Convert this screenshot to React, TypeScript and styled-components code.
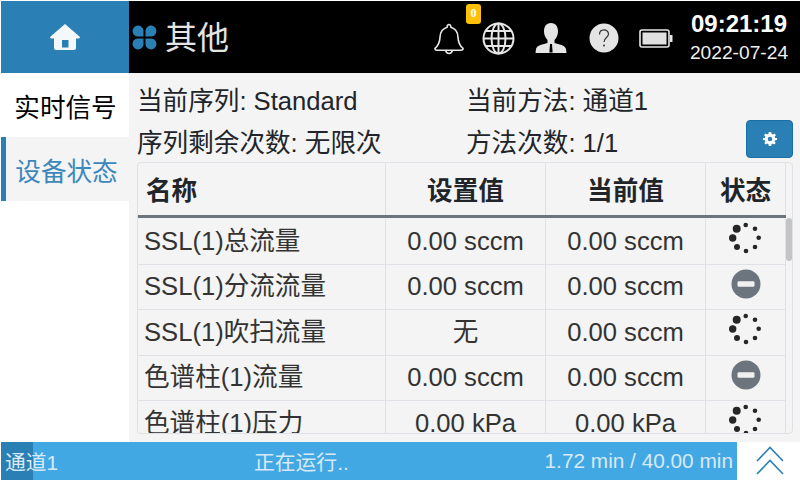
import React from "react";
import styled, { createGlobalStyle } from "styled-components";

const Global = createGlobalStyle`
  html, body { margin: 0; padding: 0; background: #fff; }
  * { box-sizing: border-box; }
  body { font-family: "Liberation Sans", "Noto Sans CJK SC", sans-serif; color: #212529; }
`;

const Screen = styled.div`
  width: 800px;
  height: 480px;
  padding: 1px 0 0 1px;
  background: #fff;
  display: grid;
  grid-template-rows: 72px 369px 38px;
  overflow: hidden;
`;

const Header = styled.header`
  display: flex;
  align-items: stretch;
  background: #000;
`;

const HomeCell = styled.div`
  width: 128px;
  background: #2a7fb4;
  display: flex;
  align-items: center;
  justify-content: center;
`;

const TitleBlock = styled.div`
  display: flex;
  align-items: center;
  padding-left: 3px;
  gap: 8px;
  flex: 1;
`;

const Title = styled.span`
  font-size: 32px;
  line-height: 1;
  color: #e4e4e4;
  padding-top: 2px;
`;

const IconSlot = styled.div<{ $w: number }>`
  position: relative;
  width: ${(p) => p.$w}px;
  display: flex;
  align-items: center;
  justify-content: center;
  padding-top: 2px;
`;

const Badge = styled.span`
  position: absolute;
  top: 3px;
  left: 42px;
  width: 15px;
  height: 20px;
  border-radius: 3px;
  background: #ffc107;
  color: #fff;
  font-family: "Liberation Serif", serif;
  font-weight: bold;
  font-size: 12px;
  line-height: 18px;
  text-align: center;
`;

const Clock = styled.div`
  width: 100px;
  margin: 0 11px 0 7px;
  display: flex;
  flex-direction: column;
  align-items: center;
  color: #fff;
  padding-top: 9px;
`;

const Time = styled.div`
  font-size: 24px;
  font-weight: bold;
  line-height: 27px;
`;

const DateText = styled.div`
  font-size: 19.2px;
  line-height: 24px;
  margin-top: 4px;
  color: #f0f0f0;
`;

const Body = styled.div`
  display: flex;
  min-height: 0;
`;

const Side = styled.nav`
  width: 128px;
  flex: none;
  background: #fff;
`;

const SideItem = styled.div<{ $active?: boolean }>`
  height: 64px;
  display: flex;
  align-items: center;
  justify-content: center;
  font-size: 25.6px;
  padding-left: ${(p) => (p.$active ? "0" : "1px")};
  padding-right: ${(p) => (p.$active ? "2px" : "0")};
  color: ${(p) => (p.$active ? "#3c88bd" : "#000")};
  background: ${(p) => (p.$active ? "#f4f4f4" : "#fff")};
  border-left: ${(p) => (p.$active ? "5px solid #2a7fb4" : "0")};
`;

const Main = styled.main`
  flex: 1;
  min-width: 0;
  background: #f4f4f4;
  padding: 6px 7px 8px 8px;
  display: flex;
  flex-direction: column;
`;

const InfoGrid = styled.div`
  display: grid;
  grid-template-columns: 329px 1fr 47px;
  grid-template-rows: 42px 32px;
  padding-top: 9px;
  height: 83px;
  align-items: start;
  font-size: 25.6px;
  color: #212529;
  line-height: 26px;
`;

const InfoText = styled.div<{ $col: number }>`
  grid-column: ${(p) => p.$col};
  white-space: nowrap;
`;

const GearButton = styled.button`
  grid-column: 3;
  grid-row: 2;
  align-self: start;
  width: 47px;
  height: 38px;
  border-radius: 4px;
  border: 1px solid #1a6ea8;
  background: #2a7fb4;
  padding: 0;
  display: flex;
  align-items: center;
  justify-content: center;
  margin-top: -10px;
`;

const TableBox = styled.div`
  position: relative;
  flex: 1;
  min-height: 0;
  border: 1px solid #dee2e6;
  border-radius: 4px;
  display: flex;
  flex-direction: column;
  overflow: hidden;
`;

const HeadRow = styled.div`
  display: grid;
  grid-template-columns: 248px 160px 160px 80px;
  height: 55px;
  flex: none;
  border-bottom: 3px solid #6c757d;
  margin-right: 6px;
  font-size: 25.6px;
  font-weight: bold;
`;

const HeadCell = styled.div<{ $left?: boolean }>`
  display: flex;
  align-items: center;
  justify-content: ${(p) => (p.$left ? "flex-start" : "center")};
  padding-left: ${(p) => (p.$left ? "8px" : "0")};
  padding-bottom: 1px;
  border-right: 1px solid #dee2e6;
`;

const Rows = styled.div`
  flex: 1;
  min-height: 0;
  overflow: hidden;
  margin-right: 6px;
  padding-top: 1px;
`;

const Thumb = styled.div`
  position: absolute;
  top: 55px;
  right: 0;
  width: 6px;
  height: 43px;
  border-radius: 3px;
  background: #c4c4c4;
`;

const Row = styled.div`
  display: grid;
  grid-template-columns: 248px 160px 160px 80px;
  height: 45.5px;
  border-bottom: 1px solid #dee2e6;
  font-size: 25.6px;
  color: #333;
`;

const Cell = styled.div<{ $left?: boolean }>`
  display: flex;
  align-items: center;
  justify-content: ${(p) => (p.$left ? "flex-start" : "center")};
  padding-left: ${(p) => (p.$left ? "6px" : "0")};
  padding-top: 1px;
  border-right: 1px solid #dee2e6;
  white-space: nowrap;
  line-height: 1;
`;

const IconCell = styled(Cell)`
  padding-bottom: 7px;
`;

const Footer = styled.footer`
  display: flex;
  align-items: stretch;
`;

const Progress = styled.div`
  position: relative;
  flex: 1;
  background: #42a8e4;
  color: #d8e8f4;
  font-size: 20.8px;
`;

const ProgressFill = styled.div`
  position: absolute;
  inset: 0 auto 0 0;
  background: #2a7fb4;
`;

const ProgressText = styled.div`
  position: relative;
  height: 100%;
  display: flex;
  align-items: center;
  justify-content: space-between;
  padding: 0 4px;
`;

const Collapse = styled.div`
  width: 63px;
  flex: none;
  background: #fff;
  padding-left: 2px;
  display: flex;
  align-items: center;
  justify-content: center;
`;

const Spinner = () => (
  <svg width="34" height="34" viewBox="-17 -17 34 34" fill="#262626">
    <circle cx="-9.3" cy="-9.2" r="4" />
    <circle cx="-0.3" cy="-13" r="2.3" />
    <circle cx="9" cy="-9.2" r="2.3" />
    <circle cx="12.7" cy="-0.2" r="2.3" />
    <circle cx="9" cy="9" r="2.3" />
    <circle cx="0" cy="13" r="2.3" />
    <circle cx="-9" cy="9" r="3" />
    <circle cx="-13.3" cy="0" r="3.7" />
  </svg>
);

const Stopped = () => (
  <svg width="30" height="30" viewBox="0 0 30 30">
    <circle cx="15" cy="15" r="14.5" fill="#6c757d" />
    <rect x="6.5" y="12.2" width="17" height="5.6" rx="1.4" fill="#f0f0f0" />
  </svg>
);

type Status = "run" | "stop";
const rows: [string, string, string, Status][] = [
  ["SSL(1)总流量", "0.00 sccm", "0.00 sccm", "run"],
  ["SSL(1)分流流量", "0.00 sccm", "0.00 sccm", "stop"],
  ["SSL(1)吹扫流量", "无", "0.00 sccm", "run"],
  ["色谱柱(1)流量", "0.00 sccm", "0.00 sccm", "stop"],
  ["色谱柱(1)压力", "0.00 kPa", "0.00 kPa", "run"],
];

export default function App() {
  const elapsed = 1.72;
  const total = 40;
  return (
    <>
      <Global />
      <Screen>
        <Header>
          <HomeCell>
            <svg width="32" height="28" viewBox="0 0 32 28">
              <path
                fill="#f4f8fb"
                d="M16 1 L31 14 Q31 15.5 29 15.5 L27 15.5 L27 25 Q27 27 25 27 L7 27 Q5 27 5 25 L5 15.5 L3 15.5 Q1 15.5 1 14 Z"
              />
              <rect x="13" y="17" width="6.5" height="7.5" fill="#2a7fb4" />
            </svg>
          </HomeCell>
          <TitleBlock>
            <svg width="25" height="25" viewBox="0 0 25 25" fill="#2a7fb4">
              <path d="M11.5 11.5 H5.5 A5.5 5.5 0 1 1 11.5 5.5 Z" />
              <path d="M13.5 11.5 H19.5 A5.5 5.5 0 1 0 13.5 5.5 Z" />
              <path d="M11.5 13.5 H5.5 A5.5 5.5 0 1 0 11.5 19.5 Z" />
              <path d="M13.5 13.5 H19.5 A5.5 5.5 0 1 1 13.5 19.5 Z" />
            </svg>
            <Title>其他</Title>
          </TitleBlock>
          <IconSlot $w={49}>
            <svg width="30" height="33" viewBox="0 0 32 34" fill="none" stroke="#e6e6e6" strokeWidth="1.7">
              <path d="M16 2 Q18 2 18 5 Q25 7 25.5 15 Q26 24 31 27.5 Q31 29.5 29 29.5 H3 Q1 29.5 1 27.5 Q6 24 6.5 15 Q7 7 14 5 Q14 2 16 2 Z" strokeLinejoin="round" />
              <path d="M12.5 30 Q13 33 16 33 Q19 33 19.5 30" />
            </svg>
            <Badge>0</Badge>
          </IconSlot>
          <IconSlot $w={51}>
            <svg width="33" height="33" viewBox="0 0 33 33" fill="none" stroke="#e6e6e6" strokeWidth="2">
              <circle cx="16.5" cy="16.5" r="15" />
              <ellipse cx="16.5" cy="16.5" rx="7" ry="15" />
              <path d="M16.5 1.5 V31.5 M1.5 16.5 H31.5 M3.8 9 H29.2 M3.8 24 H29.2" />
            </svg>
          </IconSlot>
          <IconSlot $w={53}>
            <svg width="32" height="31" viewBox="0 0 32 31">
              <path fill="#e6e6e6" d="M16 0 C21 0 23 4 23 8.5 C23 12 21.5 15 19.5 17 L19.5 20 C24 21.5 30 22 31 26 L31.5 30 H0.5 L1 26 C2 22 8 21.5 12.5 20 L12.5 17 C10.5 15 9 12 9 8.5 C9 4 11 0 16 0 Z" />
              <path fill="#000" d="M15 21 H17 L17.6 29.5 H14.4 Z" />
            </svg>
          </IconSlot>
          <IconSlot $w={53}>
            <svg width="30" height="30" viewBox="0 0 30 30">
              <circle cx="15" cy="15" r="14.5" fill="#e4e4e4" />
              <path d="M10.5 11.5 C10.5 5.5 19.5 5.5 19.5 11 C19.5 14.5 15 14.5 15 19" fill="none" stroke="#333" strokeWidth="1.2" />
              <circle cx="15" cy="22.5" r="1" fill="#333" />
            </svg>
          </IconSlot>
          <IconSlot $w={52}>
            <svg width="34" height="19" viewBox="0 0 34 19">
              <rect x="1" y="1" width="29" height="17" rx="2" fill="none" stroke="#e6e6e6" strokeWidth="1.6" />
              <rect x="3.5" y="3.5" width="24" height="12" fill="#e0e0e0" />
              <rect x="31" y="6" width="2.5" height="7" fill="#e6e6e6" />
            </svg>
          </IconSlot>
          <Clock>
            <Time>09:21:19</Time>
            <DateText>2022-07-24</DateText>
          </Clock>
        </Header>
        <Body>
          <Side>
            <SideItem>实时信号</SideItem>
            <SideItem $active>设备状态</SideItem>
          </Side>
          <Main>
            <InfoGrid>
              <InfoText $col={1}>当前序列: Standard</InfoText>
              <InfoText $col={2}>当前方法: 通道1</InfoText>
              <InfoText $col={1}>序列剩余次数: 无限次</InfoText>
              <InfoText $col={2}>方法次数: 1/1</InfoText>
              <GearButton aria-label="设置">
                <svg width="14" height="14" viewBox="0 0 14 14">
                  <path
                    fill="#fff"
                    fillRule="evenodd"
                    d="M5.8 0 H8.2 L8.6 1.8 L9.9 2.4 L11.5 1.4 L12.9 3.2 L11.7 4.6 L12.1 6 L14 6.1 V8 L12.1 8.2 L11.6 9.6 L12.7 11 L11.2 12.6 L9.8 11.6 L8.5 12.2 L8.2 14 H5.8 L5.5 12.2 L4.2 11.6 L2.8 12.6 L1.3 11 L2.4 9.6 L1.9 8.2 L0 8 V6.1 L1.9 6 L2.3 4.6 L1.1 3.2 L2.5 1.4 L4.1 2.4 L5.4 1.8 Z M7 4.7 A2.3 2.3 0 1 0 7 9.3 A2.3 2.3 0 1 0 7 4.7 Z"
                  />
                </svg>
              </GearButton>
            </InfoGrid>
            <TableBox>
              <HeadRow>
                <HeadCell $left>名称</HeadCell>
                <HeadCell>设置值</HeadCell>
                <HeadCell>当前值</HeadCell>
                <HeadCell>状态</HeadCell>
              </HeadRow>
              <Rows>
                {rows.map(([name, set, cur, st], i) => (
                  <Row key={i}>
                    <Cell $left>{name}</Cell>
                    <Cell>{set}</Cell>
                    <Cell>{cur}</Cell>
                    <IconCell>{st === "run" ? <Spinner /> : <Stopped />}</IconCell>
                  </Row>
                ))}
              </Rows>
              <Thumb />
            </TableBox>
          </Main>
        </Body>
        <Footer>
          <Progress>
            <ProgressFill style={{ width: `${(elapsed / total) * 100}%` }} />
            <ProgressText>
              <span>通道1</span>
              <span>正在运行..</span>
              <span>1.72 min / 40.00 min</span>
            </ProgressText>
          </Progress>
          <Collapse>
            <svg width="30" height="30" viewBox="0 0 30 30" fill="none" stroke="#2a7fb4" strokeWidth="1.6">
              <path d="M2 15 L15 1.5 L28 15" />
              <path d="M2 28 L15 14.5 L28 28" />
            </svg>
          </Collapse>
        </Footer>
      </Screen>
    </>
  );
}
